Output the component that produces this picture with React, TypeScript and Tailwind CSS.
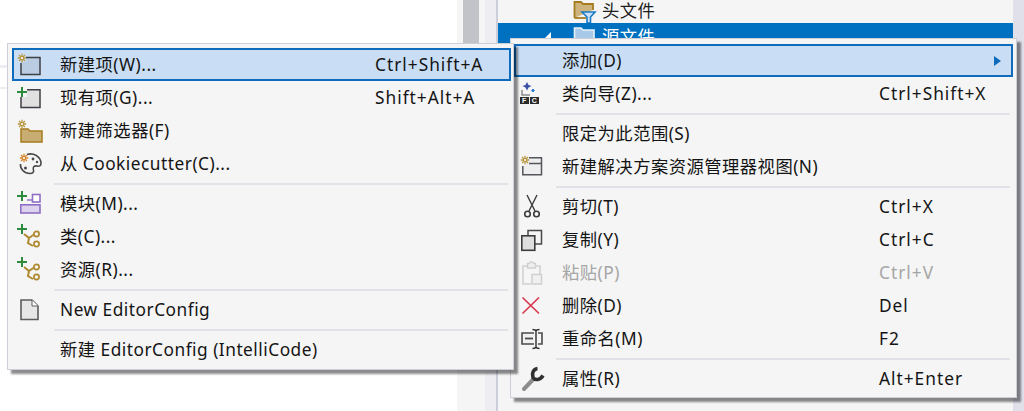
import React from "react";

const Sparkle = ({ x = 6, y = 7, c = "#b8973e", r = 4.2 }: { x?: number; y?: number; c?: string; r?: number }) => (
  <g stroke={c} strokeWidth={1.3}>
    <path d={`M${x - r} ${y}H${x + r}M${x} ${y - r}V${y + r}M${x - r * 0.7} ${y - r * 0.7}L${x + r * 0.7} ${y + r * 0.7}M${x + r * 0.7} ${y - r * 0.7}L${x - r * 0.7} ${y + r * 0.7}`} />
    <circle cx={x} cy={y} r={1.6} fill="#f5f5f5" strokeWidth={1} />
  </g>
);
const Plus = ({ x = 6, y = 8 }: { x?: number; y?: number }) => (
  <path d={`M${x - 5} ${y}H${x + 5}M${x} ${y - 5}V${y + 5}`} stroke="#2e8b3d" strokeWidth={2} fill="none" />
);
const Svg = ({ children }: { children: React.ReactNode }) => (
  <svg width="28" height="28" viewBox="0 0 28 28" fill="none" className="block shrink-0">{children}</svg>
);

const icons: Record<string, React.ReactNode> = {
  newItem: (
    <Svg>
      <path d="M5 6.500H24V23.500H5Z" fill="#b9cce2" />
      <rect x="1" y="2" width="9" height="9" fill="#c9def5" />
      <path d="M10 6.500H24V23.500H5V12" stroke="#3f3f46" strokeWidth={1.5} />
      <Sparkle />
    </Svg>
  ),
  existing: (
    <Svg>
      <path d="M5 6H24V23.500H5Z" fill="#e0e0e0" />
      <rect x="0" y="2" width="11" height="11" fill="#f5f5f5" />
      <path d="M11 5.800H24V23.500H5V13" stroke="#3f3f46" strokeWidth={1.5} />
      <Plus />
    </Svg>
  ),
  filter: (
    <Svg>
      <path d="M5 25V12H12L14 14H26V25Z" fill="#c8ad72" stroke="#a67c1e" strokeWidth={1.5} />
      <Sparkle x={6} y={7} />
    </Svg>
  ),
  cookie: (
    <Svg>
      <path d="M11 4.500C17 2.500 25 6 25 13.500C25 16 23 16.500 21 16C18 15.500 16.500 17 17.500 20C18 22 17 23.500 14 23.500C8 23.500 4 18.500 4.500 14" stroke="#4a4a4a" strokeWidth={1.6} />
      <circle cx="17" cy="9" r="1.400" fill="#4a4a4a" />
      <circle cx="9.500" cy="18" r="1.500" fill="#4a4a4a" />
      <circle cx="21" cy="12" r="1.200" fill="#4a4a4a" />
      <Sparkle x={8} y={8} c="#d8872b" />
    </Svg>
  ),
  module: (
    <Svg>
      <Plus x={6} y={6} />
      <rect x="16.500" y="4.500" width="7.500" height="7.500" fill="#fff" stroke="#8f6fc4" strokeWidth={1.6} />
      <path d="M11 10H16" stroke="#8f6fc4" strokeWidth={1.4} />
      <rect x="4.800" y="14.800" width="19.200" height="8.200" fill="#ddd2ee" stroke="#8f6fc4" strokeWidth={1.6} />
    </Svg>
  ),
  graph: (
    <Svg>
      <Plus x={6} y={6} />
      <path d="M8 11L13 15L12 20L17 23M13 15L18 11.500" stroke="#b08a30" strokeWidth={2} />
      <circle cx="20.500" cy="11" r="2.600" fill="#f5f5f5" stroke="#b08a30" strokeWidth={1.7} />
      <circle cx="20.500" cy="21" r="2.600" fill="#f5f5f5" stroke="#b08a30" strokeWidth={1.7} />
    </Svg>
  ),
  doc: (
    <Svg>
      <path d="M5 4H16L22 10V23.500H5Z" fill="#e6e6e6" stroke="#5c5c5c" strokeWidth={1.6} />
      <path d="M16 4V10H22" fill="#fff" stroke="#5c5c5c" strokeWidth={1} />
    </Svg>
  ),
  wizard: (
    <Svg>
      <path d="M9 2L10.500 5L13.500 6L10.500 7.500L9 10.500L7.500 7.500L4.500 6L7.500 5Z" fill="#3a4fa8" />
      <path d="M15 9L16.500 10.500L15 12L13.500 10.500Z" fill="#2f7fd0" stroke="#2f7fd0" />
      <path d="M4 10V15H12" stroke="#8a8a8a" strokeWidth={1.5} />
      <rect x="2" y="17" width="9" height="7" fill="#2a2a2a" />
      <rect x="12" y="17" width="9" height="7" fill="#2a2a2a" />
      <text x="6.500" y="23" fontSize="7" fontWeight="700" fill="#fff" textAnchor="middle" fontFamily="Liberation Sans">F</text>
      <text x="16.500" y="23" fontSize="7" fontWeight="700" fill="#fff" textAnchor="middle" fontFamily="Liberation Sans">C</text>
    </Svg>
  ),
  view: (
    <Svg>
      <path d="M11 4.800H23.500V21.800H4.800V13" fill="#eeeeee" stroke="#55555c" strokeWidth={1.5} />
      <path d="M11 10.500H23" stroke="#55555c" strokeWidth={1.5} />
      <Sparkle x={7} y={7} />
    </Svg>
  ),
  cut: (
    <Svg>
      <path d="M9 2L17 18M19 2L11 18" stroke="#3c3c3c" strokeWidth={1.4} />
      <circle cx="9.500" cy="21" r="2.800" stroke="#3c3c3c" strokeWidth={1.6} />
      <circle cx="18.500" cy="21" r="2.800" stroke="#3c3c3c" strokeWidth={1.6} />
    </Svg>
  ),
  copy: (
    <Svg>
      <path d="M10 9V4.500H23.500V18H17" stroke="#4a4a4a" strokeWidth={1.5} />
      <rect x="3.800" y="9.800" width="13" height="14.500" fill="#dedede" stroke="#3c3c3c" strokeWidth={1.6} />
    </Svg>
  ),
  paste: (
    <Svg>
      <path d="M9 7H5V25H13M18 7H22V15" stroke="#cfcfcf" strokeWidth={1.5} />
      <path d="M9.500 7V4.500H11.500C12 2 15 2 15.500 4.500H17.500V9H9.500Z" fill="#eeeeee" stroke="#cfcfcf" strokeWidth={1.3} />
      <rect x="14" y="15.500" width="9.500" height="9.500" fill="#f0f0f0" stroke="#cfcfcf" strokeWidth={1.5} />
    </Svg>
  ),
  del: (
    <Svg>
      <path d="M4.500 5.500L21 21.500M21 5.500L4.500 21.500" stroke="#d8394f" strokeWidth={1.7} />
    </Svg>
  ),
  rename: (
    <Svg>
      <path d="M16 8H4V19H16" fill="#f0f0f0" stroke="#4a4a4a" strokeWidth={1.6} />
      <path d="M7 13.500H15" stroke="#4a4a4a" strokeWidth={1.8} />
      <path d="M14.500 4.500C16 4.500 17.500 4.500 18 6V22C17.500 23.500 16 23.500 14.500 23.500M21.500 4.500C20 4.500 18.500 4.500 18 6M18 22C18.500 23.500 20 23.500 21.500 23.500" stroke="#2c2c2c" strokeWidth={1.4} />
      <path d="M20 8H24V19H20" stroke="#4a4a4a" strokeWidth={1.6} />
    </Svg>
  ),
  wrench: (
    <Svg>
      <path d="M6 24L15.500 14" stroke="#8c8c8c" strokeWidth={4} strokeLinecap="round" />
      <path d="M19.500 3.500C15.500 4 13.500 8 15 12.500C17 15.500 22 15.500 25 10.500" stroke="#303030" strokeWidth={3.6} fill="none" />
    </Svg>
  ),
};

type Item =
  | { sep: true }
  | { sep?: false; icon?: string; label: string; key2?: string; hi?: boolean; off?: boolean; arrow?: boolean };

const leftItems: Item[] = [
  { icon: "newItem", label: "新建项(W)...", key2: "Ctrl+Shift+A", hi: true },
  { icon: "existing", label: "现有项(G)...", key2: "Shift+Alt+A" },
  { icon: "filter", label: "新建筛选器(F)" },
  { icon: "cookie", label: "从 Cookiecutter(C)..." },
  { sep: true },
  { icon: "module", label: "模块(M)..." },
  { icon: "graph", label: "类(C)..." },
  { icon: "graph", label: "资源(R)..." },
  { sep: true },
  { icon: "doc", label: "New EditorConfig" },
  { sep: true },
  { label: "新建 EditorConfig (IntelliCode)" },
];

const rightItems: Item[] = [
  { label: "添加(D)", hi: true, arrow: true },
  { icon: "wizard", label: "类向导(Z)...", key2: "Ctrl+Shift+X" },
  { sep: true },
  { label: "限定为此范围(S)" },
  { icon: "view", label: "新建解决方案资源管理器视图(N)" },
  { sep: true },
  { icon: "cut", label: "剪切(T)", key2: "Ctrl+X" },
  { icon: "copy", label: "复制(Y)", key2: "Ctrl+C" },
  { icon: "paste", label: "粘贴(P)", key2: "Ctrl+V", off: true },
  { icon: "del", label: "删除(D)", key2: "Del" },
  { icon: "rename", label: "重命名(M)", key2: "F2" },
  { sep: true },
  { icon: "wrench", label: "属性(R)", key2: "Alt+Enter" },
];

function Menu({ items, wide }: { items: Item[]; wide?: boolean }) {
  return (
    <>
      {items.map((it, i) =>
        it.sep ? (
          <div key={i} className="h-[7px] flex items-center pl-[42px] pr-[3px]">
            <div className="h-[2px] w-full bg-[#e0e2e8]" />
          </div>
        ) : (
          <div
            key={i}
            className={`h-[33px] flex items-center pl-[4px] ${it.hi ? "bg-[#c9def5] shadow-[inset_0_0_0_2px_#0f6cbd]" : ""} ${it.off ? "text-[#a6a6a6]" : "text-[#141414]"}`}
          >
            <span className="w-[28px] h-[28px] shrink-0">{it.icon ? icons[it.icon] : null}</span>
            <span className={`ml-[16px] mb-[1px] whitespace-nowrap shrink-0 ${wide ? "w-[317px]" : "w-[315px]"}`}>{it.label}</span>
            {it.key2 ? <span className="mb-[1px] whitespace-nowrap tracking-[1px]">{it.key2}</span> : null}
            {it.arrow ? (
              <svg width="7" height="10" viewBox="0 0 7 10" className="ml-auto mr-[12px]">
                <path d="M0 0L7 5L0 10Z" fill="#0f6cbd" />
              </svg>
            ) : null}
          </div>
        )
      )}
    </>
  );
}

export default function App() {
  return (
    <div className="relative w-[1024px] h-[411px] overflow-hidden flex bg-white font-['Noto_Sans','Noto_Sans_CJK_SC',sans-serif] text-[17.3px] tracking-[0.5px] leading-[33px]">
      {/* background panes */}
      <div className="w-[457px] pt-[65px] flex flex-col">
        <div className="h-[3px] bg-[#ececf2]" />
        <div className="h-[2px] mt-[19px] bg-[#ececf2]" />
      </div>
      <div className="w-[28px] bg-[#f5f5f5]">
        <div className="ml-[6px] w-[16px] h-[200px] bg-[#c2c3c9]" />
      </div>
      <div className="w-[13px] bg-[#eeeef2] border-r-2 border-[#cccedb]" />
      <div className="w-[515px] flex flex-col bg-[#f5f5f5]">
        <div className="h-[23px] flex items-center pl-[75px]">
          <svg width="25" height="24" viewBox="0 0 25 24" fill="none" className="shrink-0">
            <path d="M1.500 18V2H8L10 4H20V10" fill="#cdb47c" stroke="#a67c1e" strokeWidth={1.8} />
            <path d="M1.500 18H13" stroke="#a67c1e" strokeWidth={1.8} />
            <path d="M9 12H22L17.500 17V23H14V17Z" fill="#c9e2f7" stroke="#1b79c4" strokeWidth={1.6} />
          </svg>
          <span className="ml-[4px] mb-[2px] text-[#1e1e1e]">头文件</span>
        </div>
        <div className="h-[26px] bg-[#0070c0] flex items-center pl-[44px] overflow-hidden">
          <svg width="9" height="9" viewBox="0 0 9 9" className="shrink-0"><path d="M9 0V9H0Z" fill="#ffffff" /></svg>
          <svg width="25" height="22" viewBox="0 0 25 22" fill="none" className="ml-[22px] shrink-0">
            <path d="M1.500 22V3H8L10 5H21V22" fill="#a9c9e8" stroke="#e8f1fa" strokeWidth={1.6} />
          </svg>
          <span className="ml-[4px] text-white">源文件</span>
        </div>
      </div>
      <div className="flex-1 bg-[#dfe0ea]" />

      {/* context menus */}
      <div className="absolute left-[510px] top-[38px] w-[507px] h-[360px] bg-[#f5f5f5] border border-[#ccced8] pt-[5px] pl-[3px] pr-[3px] shadow-[4px_4px_2px_rgba(0,0,0,0.45)]">
        <Menu items={rightItems} wide />
      </div>
      <div className="absolute left-[7px] top-[43px] w-[507px] h-[327px] bg-[#f5f5f5] border border-[#ccced8] pt-[4px] pl-[4px] pr-[2px] shadow-[4px_4px_2px_rgba(0,0,0,0.45)]">
        <Menu items={leftItems} />
      </div>
    </div>
  );
}
